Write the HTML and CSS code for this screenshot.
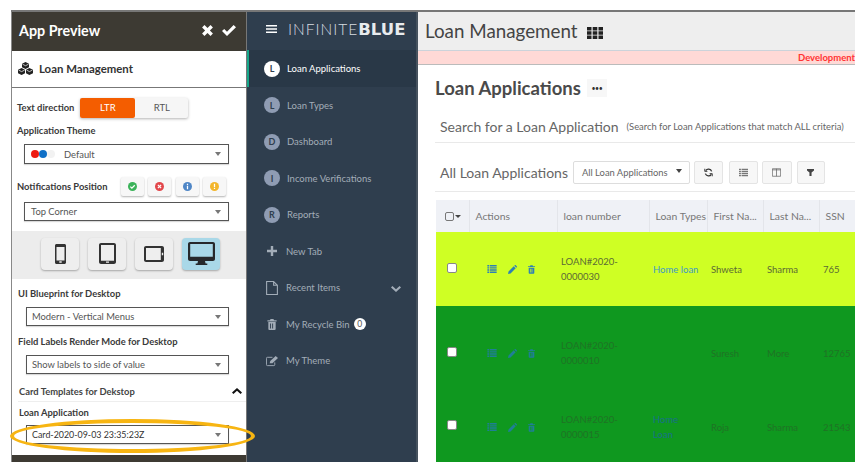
FILE: index.html
```html
<!DOCTYPE html>
<html lang="en">
<head>
    <meta charset="UTF-8">
    <title>App Preview - Loan Management</title>
    <link rel="stylesheet" href="styles.css">
</head>
<body>
    <svg class="sprites" aria-hidden="true">
        <symbol id="i-list" viewBox="0 0 14 12"><path d="M0 0h3v2.200H0zM4 0h10v2.200H4zM0 3.200h3v2.200H0zM4 3.200h10v2.200H4zM0 6.500h3v2.200H0zM4 6.500h10v2.200H4zM0 9.800h3V12H0zM4 9.800h10V12H4z"/></symbol>
        <symbol id="i-pencil" viewBox="0 0 12 12"><path d="M0 12l.7-3.400L7.600 1.700l2.700 2.700-6.900 6.900zM8.400.9l.6-.6c.4-.4 1-.4 1.400 0l1.300 1.300c.4.4.4 1 0 1.400l-.6.6z"/></symbol>
        <symbol id="i-trash" viewBox="0 0 10 12"><path fill-rule="evenodd" d="M3.400 0h3.200l.6 1.400H10v1.200H0V1.400h2.800zM1 3.400h8V11c0 .6-.4 1-1 1H2c-.6 0-1-.4-1-1zm1.800 1.400v5.600h1V4.800zm2.400 0v5.600h1V4.800z"/></symbol>
    </svg>

    <div class="frame">
        <aside class="preview">
            <div class="preview-head">
                <h1>App Preview</h1>
                <svg class="head-icon" viewBox="0 0 12 12"><path d="M1 3.200L3.200 1 6 3.800 8.800 1 11 3.200 8.200 6 11 8.800 8.800 11 6 8.200 3.200 11 1 8.800 3.800 6z"/></svg>
                <svg class="head-icon head-check" viewBox="0 0 14 12"><path d="M0 6.600l2.200-2.200 2.800 2.800L11.600.6 14 2.800 5 11.600z"/></svg>
            </div>
            <div class="app-row">
                <svg class="app-logo" viewBox="0 0 15 13"><path d="M7.500 0L11 1.800v3.400L7.500 7 4 5.200V1.800z"/><path d="M3.600 6L7 7.700v3.500L3.600 13 0 11.200V7.700z"/><path d="M11.400 6L15 7.700v3.500L11.400 13 8 11.200V7.700z"/><path d="M4.500 2.200l3 1.500 3-1.500M.6 8.100l3 1.500 3-1.500M8.600 8.100l2.800 1.500 3-1.500" fill="none" stroke="#fff" stroke-width=".7"/></svg>
                <span>Loan Management</span>
            </div>

            <div class="field-row dir-row">
                <label class="field-label">Text direction</label>
                <div class="toggle">
                    <span class="toggle-on">LTR</span>
                    <span>RTL</span>
                </div>
            </div>

            <label class="field-label theme-label">Application Theme</label>
            <div class="select theme-select">
                <span class="dots"><i class="dot-red"></i><i class="dot-blue"></i><i class="dot-white"></i></span>
                <span class="select-text">Default</span>
                <b class="caret"></b>
            </div>

            <div class="field-row notif-row">
                <label class="field-label">Notifications Position</label>
                <div class="notif-btns">
                    <span class="notif"><svg viewBox="0 0 10 10"><circle cx="5" cy="5" r="5" fill="#3cb35a"/><path d="M2.600 5.100l1.700 1.700 3.200-3.200" fill="none" stroke="#fff" stroke-width="1.400"/></svg></span>
                    <span class="notif"><svg viewBox="0 0 10 10"><circle cx="5" cy="5" r="5" fill="#e2474b"/><path d="M3.200 3.200l3.600 3.600M6.800 3.200L3.200 6.800" fill="none" stroke="#fff" stroke-width="1.400"/></svg></span>
                    <span class="notif"><svg viewBox="0 0 10 10"><circle cx="5" cy="5" r="5" fill="#4f86c6"/><path d="M4.300 2h1.400v1.300H4.300zM4.300 4.200h1.400V8H4.300z" fill="#fff"/></svg></span>
                    <span class="notif"><svg viewBox="0 0 10 10"><circle cx="5" cy="5" r="5" fill="#f3b62c"/><path d="M4.300 2h1.400v3.600H4.300zM4.300 6.400h1.400v1.500H4.300z" fill="#fff"/></svg></span>
                </div>
            </div>
            <div class="select notif-select">
                <span class="select-text">Top Corner</span>
                <b class="caret"></b>
            </div>

            <div class="devices">
                <span class="device">
                    <svg width="11" height="20" viewBox="0 0 11 20"><path fill-rule="evenodd" fill="#333" d="M1.500 0h8C10.300 0 11 .7 11 1.500v17c0 .8-.7 1.500-1.500 1.500h-8C.7 20 0 19.300 0 18.500v-17C0 .7.700 0 1.500 0zM1.500 3v13.500h8V3zM4.300 17.300v1.400h2.400v-1.400z"/></svg>
                </span>
                <span class="device">
                    <svg width="17" height="21" viewBox="0 0 17 21"><path fill-rule="evenodd" fill="#333" d="M2 0h13c1.100 0 2 .9 2 2v17c0 1.100-.9 2-2 2H2c-1.100 0-2-.9-2-2V2C0 .9.900 0 2 0zm0 2v15.800h13V2zm5 16.400v1.400h3v-1.400z"/></svg>
                </span>
                <span class="device">
                    <svg width="20" height="16" viewBox="0 0 20 16"><path fill-rule="evenodd" fill="#333" d="M2 0h16c1.100 0 2 .9 2 2v12c0 1.100-.9 2-2 2H2c-1.100 0-2-.9-2-2V2C0 .9.900 0 2 0zm0 2v12h14.800V2zm15.800 4.800v2.400h1.400V6.800z"/></svg>
                </span>
                <span class="device device-on">
                    <svg width="27" height="23" viewBox="0 0 27 23"><path fill-rule="evenodd" fill="#26282b" d="M2 0h23c1.100 0 2 .9 2 2v15c0 1.100-.9 2-2 2h-8l.6 2.400h1.700V23H7.700v-1.600h1.700L10 19H2c-1.100 0-2-.9-2-2V2C0 .9.900 0 2 0zm.2 2v12.800h22.600V2z"/></svg>
                </span>
            </div>

            <label class="field-label sub-label first-sub">UI Blueprint for Desktop</label>
            <div class="select sub-select">
                <span class="select-text">Modern - Vertical Menus</span>
                <b class="caret"></b>
            </div>

            <label class="field-label sub-label">Field Labels Render Mode for Desktop</label>
            <div class="select sub-select">
                <span class="select-text">Show labels to side of value</span>
                <b class="caret"></b>
            </div>

            <div class="card-head">
                <span>Card Templates for Dekstop</span>
                <svg viewBox="0 0 10 6"><path d="M0 4.400L5 0l5 4.400L8.600 6 5 2.800 1.400 6z"/></svg>
            </div>
            <label class="field-label loan-label">Loan Application</label>
            <div class="select sub-select">
                <span class="select-text card-text">Card-2020-09-03 23:35:23Z</span>
                <b class="caret"></b>
            </div>

            <div class="preview-foot"></div>
        </aside>

        <nav class="sidenav">
            <div class="brand">
                <svg class="burger" viewBox="0 0 11 8"><path d="M0 0h11v1.600H0zM0 3.200h11v1.600H0zM0 6.400h11V8H0z"/></svg>
                <span class="brand-thin">INFINITE</span><span class="brand-bold">BLUE</span>
            </div>
            <a class="nav-item nav-active"><span class="nav-badge">L</span>Loan Applications</a>
            <a class="nav-item"><span class="nav-badge">L</span>Loan Types</a>
            <a class="nav-item"><span class="nav-badge">D</span>Dashboard</a>
            <a class="nav-item"><span class="nav-badge">I</span>Income Verifications</a>
            <a class="nav-item"><span class="nav-badge">R</span>Reports</a>
            <a class="nav-item">
                <svg class="nav-icon" viewBox="0 0 10 10"><path d="M3.800 0h2.400v3.800H10v2.400H6.200V10H3.800V6.200H0V3.800h3.800z"/></svg>New Tab
            </a>
            <a class="nav-item">
                <svg class="nav-icon nav-icon-line" viewBox="0 0 11 13"><path d="M.5.500h6.500l3.500 3.500v8.500H.5zM7 .5V4h3.500"/></svg>Recent Items
                <svg class="nav-chevron" viewBox="0 0 10 6"><path d="M0 1.600L1.400 0 5 3.200 8.600 0 10 1.600 5 6z"/></svg>
            </a>
            <a class="nav-item">
                <svg class="nav-icon nav-icon-trash"><use href="#i-trash"/></svg>My Recycle Bin<span class="nav-count">0</span>
            </a>
            <a class="nav-item">
                <svg class="nav-icon nav-icon-edit" viewBox="0 0 13 11"><path class="edit-box" d="M9.500 7v2.500a1 1 0 0 1-1 1h-7a1 1 0 0 1-1-1v-7a1 1 0 0 1 1-1H7"/><path d="M4 8l.6-2.400L10.500 0 13 2.200 7 8z"/></svg>My Theme
            </a>
        </nav>

        <main class="content">
            <header class="topbar">
                <span>Loan Management</span>
                <svg class="grid-icon" viewBox="0 0 16 12"><path d="M0 0h4.500v3.500H0zM5.700 0h4.600v3.500H5.700zM11.500 0H16v3.500h-4.500zM0 4.300h4.500v3.500H0zM5.700 4.300h4.600v3.500H5.700zM11.500 4.300H16v3.500h-4.500zM0 8.500h4.500V12H0zM5.700 8.500h4.600V12H5.700zM11.500 8.500H16V12h-4.500z"/></svg>
            </header>
            <div class="env-banner"><span>Development</span></div>

            <div class="page">
                <div class="page-title">
                    <h2>Loan Applications</h2>
                    <span class="more-btn">&bull;&bull;&bull;</span>
                </div>

                <div class="section-head search-head">
                    <h3>Search for a Loan Application</h3>
                    <small>(Search for Loan Applications that match ALL criteria)</small>
                </div>

                <div class="section-head list-head">
                    <h3>All Loan Applications</h3>
                    <div class="view-select">All Loan Applications<b class="view-caret"></b></div>
                    <span class="tool-btn tool-refresh">
                        <svg viewBox="0 0 12 12" fill="none" stroke="#333" stroke-width="1.800"><path d="M10.200 4.500A4.500 4.500 0 0 0 2.200 3.600M1.800 7.500a4.500 4.500 0 0 0 8 .9"/><path d="M1 1v3.500h3.500M11 11V7.500H7.500" stroke-width="1.200"/></svg>
                    </span>
                    <span class="tool-btn tool-list"><svg fill="#777"><use href="#i-list"/></svg></span>
                    <span class="tool-btn tool-cols">
                        <svg viewBox="0 0 12 11" fill="none" stroke="#666"><path d="M.5.500h11v10H.5zM6 .5v10M.5 2h11"/></svg>
                    </span>
                    <span class="tool-btn tool-filter">
                        <svg viewBox="0 0 10 10" fill="#444"><path d="M0 0h10v2L6.500 5v5h-3V5L0 2z"/></svg>
                    </span>
                </div>

                <table class="grid">
                    <colgroup>
                        <col class="col-check"><col class="col-actions"><col class="col-number">
                        <col class="col-type"><col class="col-first"><col class="col-last"><col class="col-ssn">
                    </colgroup>
                    <thead>
                        <tr>
                            <th class="th-check"><span class="head-box"></span><b class="head-caret"></b></th>
                            <th class="th-actions">Actions</th>
                            <th>loan number</th>
                            <th>Loan Types</th>
                            <th>First Na...</th>
                            <th>Last Na...</th>
                            <th>SSN</th>
                        </tr>
                    </thead>
                    <tbody>
                        <tr class="row-lime">
                            <td class="td-check"><input type="checkbox"></td>
                            <td><div class="row-actions">
                                <svg class="act-list"><use href="#i-list"/></svg>
                                <svg class="act-pencil"><use href="#i-pencil"/></svg>
                                <svg class="act-trash"><use href="#i-trash"/></svg>
                            </div></td>
                            <td>LOAN#2020-<br>0000030</td>
                            <td><a>Home loan</a></td>
                            <td>Shweta</td>
                            <td>Sharma</td>
                            <td>765</td>
                        </tr>
                        <tr class="row-green row-tall">
                            <td class="td-check"><input type="checkbox"></td>
                            <td><div class="row-actions">
                                <svg class="act-list"><use href="#i-list"/></svg>
                                <svg class="act-pencil"><use href="#i-pencil"/></svg>
                                <svg class="act-trash"><use href="#i-trash"/></svg>
                            </div></td>
                            <td>LOAN#2020-<br>0000010</td>
                            <td></td>
                            <td>Suresh</td>
                            <td>More</td>
                            <td>12765</td>
                        </tr>
                        <tr class="row-green row-last">
                            <td class="td-check"><input type="checkbox"></td>
                            <td><div class="row-actions">
                                <svg class="act-list"><use href="#i-list"/></svg>
                                <svg class="act-pencil"><use href="#i-pencil"/></svg>
                                <svg class="act-trash"><use href="#i-trash"/></svg>
                            </div></td>
                            <td>LOAN#2020-<br>0000015</td>
                            <td><a>Home<br>Loan</a></td>
                            <td>Roja</td>
                            <td>Sharma</td>
                            <td>21543</td>
                        </tr>
                    </tbody>
                </table>
            </div>
        </main>

        <div class="highlight-ring"></div>
    </div>
</body>
</html>
```

FILE: styles.css
```css
/* General */
html, body {
    margin: 0;
    background: #fff;
}

body {
    font-family: Lato, "Open Sans", sans-serif;
    color: #333;
    overflow: hidden;
}

.sprites {
    display: none;
}

.frame {
    position: relative;
    display: flex;
    width: 844px;
    height: 452px;
    margin: 10px 0 0 11px;
    border-top: 2px solid #777;
    box-sizing: border-box;
}

/* App preview panel */
.preview {
    display: flex;
    flex-direction: column;
    flex: none;
    width: 235px;
    box-sizing: border-box;
    background: #fff;
    border-left: 1px solid #888;
}

.preview-head {
    display: flex;
    align-items: center;
    flex: none;
    height: 39px;
    padding: 0 10px 2px 7px;
    box-sizing: border-box;
    background: #3d3a33;
    color: #fff;
}

.preview-head h1 {
    flex: 1;
    margin: 0;
    font-size: 14.3px;
    font-weight: 700;
}

.head-icon {
    width: 13px;
    height: 13px;
    fill: #fff;
}

.head-check {
    width: 14px;
    margin-left: 8px;
}

.app-row {
    display: flex;
    align-items: center;
    gap: 6px;
    flex: none;
    height: 37px;
    padding: 0 0 2px 6px;
    box-sizing: border-box;
    border-bottom: 1px solid #777;
    font-size: 11.4px;
    font-weight: 700;
    color: #333;
}

.app-logo {
    width: 15px;
    height: 13px;
    fill: #222;
}

.field-row {
    display: flex;
    align-items: center;
    padding-left: 5px;
}

.dir-row {
    margin-top: 10px;
    gap: 6px;
}

.field-label {
    display: block;
    font-size: 9.4px;
    line-height: 14px;
    font-weight: 700;
    color: #3a3a3a;
}

.toggle {
    display: flex;
    height: 20px;
    font-size: 9.5px;
    line-height: 20px;
    text-align: center;
    background: #f6f6f6;
    box-shadow: 0 1px 3px rgba(0, 0, 0, 0.3);
    border-radius: 2px;
    color: #555;
}

.toggle span {
    width: 53px;
}

.toggle .toggle-on {
    width: 55px;
    background: #f45d00;
    color: #fff;
    border-radius: 2px;
}

.theme-label {
    margin: 6px 0 0 5px;
}

.select {
    display: flex;
    align-items: center;
    flex: none;
    height: 20px;
    box-sizing: border-box;
    background: #fff;
    border: 1px solid #555;
    box-shadow: 0 1px 1px rgba(0, 0, 0, 0.15);
    font-size: 9.4px;
    color: #555;
}

.select-text {
    flex: 1;
    white-space: nowrap;
}

.caret {
    width: 0;
    height: 0;
    margin-right: 7px;
    border-left: 3px solid transparent;
    border-right: 3px solid transparent;
    border-top: 4px solid #777;
}

.theme-select {
    margin: 6px 17px 0 12px;
    padding-left: 6px;
}

.dots {
    display: flex;
    margin-right: 9px;
}

.dots i {
    width: 8px;
    height: 8px;
    border-radius: 50%;
}

.dots .dot-red { background: #ee1c12; }
.dots .dot-blue { background: #0f6fc6; }
.dots .dot-white { background: #f2f2f2; }

.notif-row {
    margin-top: 13px;
    gap: 13px;
}

.notif-btns {
    display: flex;
    gap: 4.5px;
}

.notif {
    display: flex;
    align-items: center;
    justify-content: center;
    width: 23px;
    height: 19px;
    background: #f7f7f7;
    box-shadow: 0 1px 2px rgba(0, 0, 0, 0.3);
    border-radius: 2px;
}

.notif svg {
    width: 9px;
    height: 9px;
}

.notif-select {
    height: 19px;
    margin: 6px 17px 0 12px;
    padding-left: 6px;
}

.devices {
    display: flex;
    align-items: center;
    gap: 9px;
    flex: none;
    height: 48px;
    margin-top: 10px;
    padding: 0 0 3px 29px;
    box-sizing: border-box;
    background: #ececec;
}

.device {
    display: flex;
    align-items: center;
    justify-content: center;
    width: 38px;
    height: 32px;
    background: #eee;
    border-radius: 4px;
    box-shadow: 0 1px 2px rgba(0, 0, 0, 0.3);
}

.device-on {
    background: #a9d8e8;
}

.sub-label {
    margin: 9px 0 0 6px;
}

.first-sub {
    margin-top: 8px;
}

.sub-select {
    height: 19px;
    margin: 6px 17px 0 14px;
    padding-left: 5px;
}

.card-head {
    display: flex;
    align-items: center;
    justify-content: space-between;
    flex: none;
    height: 16px;
    margin: 9px 0 0 6px;
    padding: 0 4px 2px 1px;
    border-bottom: 1px solid #eee;
    font-size: 9.4px;
    font-weight: 700;
    color: #444;
}

.card-head svg {
    width: 10px;
    height: 6px;
    fill: #111;
}

.loan-label {
    margin: 4px 0 -1px 7px;
}

.card-text {
    font-size: 8.9px;
    color: #333;
}

.preview-foot {
    flex: none;
    height: 7px;
    margin-top: auto;
    background: #3d3a33;
}

/* Side navigation */
.sidenav {
    flex: none;
    width: 170px;
    box-sizing: border-box;
    background: #2f3e4e;
    border-left: 1px solid #777;
    font-size: 9.5px;
    color: #a3adb8;
}

.brand {
    display: flex;
    align-items: center;
    height: 38px;
    padding: 0 0 4px 19px;
    box-sizing: border-box;
    color: #d8dde2;
}

.burger {
    width: 11px;
    height: 8px;
    margin-right: 11px;
    fill: #fff;
}

.brand-thin {
    font-size: 15.5px;
    font-weight: 300;
    letter-spacing: 1px;
}

.brand-bold {
    font-family: "DejaVu Sans", sans-serif;
    font-size: 16.5px;
    font-weight: 700;
    color: #e8ebee;
}

.nav-item {
    display: flex;
    align-items: center;
    height: 36.5px;
    padding: 1px 0 0 17px;
    box-sizing: border-box;
}

.nav-active {
    padding-left: 15px;
    border-left: 2px solid #17a689;
    background: #293847;
    color: #fff;
}

.nav-badge {
    display: flex;
    align-items: center;
    justify-content: center;
    flex: none;
    width: 16px;
    height: 16px;
    margin-right: 7px;
    border-radius: 50%;
    background: #8f9cb3;
    font-size: 9px;
    font-weight: 700;
    color: #2f3e4e;
}

.nav-active .nav-badge {
    background: #fff;
}

.nav-icon {
    flex: none;
    width: 10px;
    height: 10px;
    margin: 0 9px 0 3px;
    fill: #a3adb8;
}

.nav-icon-line {
    width: 12px;
    height: 14px;
    margin: 0 8px 0 2px;
    fill: none;
    stroke: #a3adb8;
}

.nav-icon-trash {
    height: 11px;
}

.nav-icon-edit {
    width: 12px;
    height: 12px;
    margin: 0 8px 0 2px;
}

.edit-box {
    fill: none;
    stroke: #a3adb8;
}

.nav-chevron {
    width: 10px;
    height: 6px;
    margin: 2px 15px 0 auto;
    fill: #a3adb8;
}

.nav-count {
    width: 12px;
    height: 12px;
    margin-left: 4px;
    border-radius: 50%;
    background: #fff;
    font-size: 8.5px;
    line-height: 12px;
    text-align: center;
    color: #555;
}

/* Main content */
.content {
    flex: 1;
    min-width: 0;
    overflow: hidden;
    border-left: 2px solid #46525e;
}

.topbar {
    display: flex;
    align-items: center;
    height: 38px;
    padding: 0 0 2px 7px;
    box-sizing: border-box;
    background: #eee;
    font-size: 18.8px;
    color: #444;
}

.grid-icon {
    width: 16px;
    height: 12px;
    margin: 5px 0 0 9px;
    fill: #222;
}

.env-banner {
    height: 15px;
    box-sizing: border-box;
    padding-left: 380px;
    background: #ffd9d6;
    border-top: 1px solid #ccd3da;
    border-bottom: 1px solid #bbb;
    font-size: 9.5px;
    line-height: 13px;
    font-weight: 700;
    color: #f33;
    white-space: nowrap;
}

.page {
    padding: 0 0 0 17px;
}

.page-title {
    display: flex;
    align-items: center;
    height: 18px;
    margin-top: 14px;
}

.page-title h2 {
    margin: 0;
    font-size: 18.5px;
    font-weight: 700;
    color: #4a4a4a;
}

.more-btn {
    width: 20px;
    height: 18px;
    margin-left: 6px;
    background: #f7f7f7;
    font-size: 7px;
    line-height: 18px;
    text-align: center;
    color: #333;
    letter-spacing: -0.5px;
}

.section-head {
    display: flex;
    align-items: center;
    box-sizing: border-box;
    padding-left: 5px;
    border-bottom: 1px solid #e9e9e9;
}

.section-head h3 {
    margin: 0;
    font-size: 14px;
    font-weight: 400;
    color: #666;
    white-space: nowrap;
}

.section-head small {
    margin-left: 8px;
    font-size: 9.4px;
    color: #666;
    white-space: nowrap;
}

.search-head {
    height: 25px;
    margin-top: 21px;
    padding-bottom: 7px;
}

.list-head {
    height: 31px;
    margin-top: 18px;
    padding-bottom: 7px;
}

.view-select {
    position: relative;
    width: 117px;
    height: 23px;
    margin-left: 5px;
    padding-left: 8px;
    box-sizing: border-box;
    background: #fff;
    border: 1px solid #ddd;
    border-radius: 2px;
    font-size: 9.4px;
    line-height: 22px;
    color: #666;
}

.view-caret {
    position: absolute;
    top: 7px;
    right: 7px;
    width: 0;
    height: 0;
    border-left: 3px solid transparent;
    border-right: 3px solid transparent;
    border-top: 4px solid #444;
}

.tool-btn {
    display: flex;
    align-items: center;
    justify-content: center;
    flex: none;
    width: 29px;
    height: 23px;
    box-sizing: border-box;
    background: #f7f7f7;
    border: 1px solid #e4e4e4;
    border-radius: 2px;
}

.tool-btn svg {
    width: 9px;
    height: 9px;
}

.tool-refresh { margin-left: 4px; }
.tool-list { margin-left: 6px; }
.tool-cols { width: 30px; margin-left: 4px; }
.tool-filter { width: 28px; margin-left: 5px; }
.tool-filter svg { width: 7px; height: 7px; }

/* Records table */
.grid {
    width: 419px;
    margin: 8px 0 0 1px;
    border-collapse: collapse;
    table-layout: fixed;
    font-size: 9.5px;
}

.col-check { width: 33px; }
.col-actions { width: 88px; }
.col-number { width: 92px; }
.col-type { width: 58px; }
.col-first { width: 56px; }
.col-last { width: 56px; }
.col-ssn { width: 36px; }

.grid th {
    height: 32px;
    padding: 0 0 0 6px;
    box-sizing: border-box;
    background: #eff1f6;
    border-left: 1px solid #e3e5ea;
    font-size: 10.4px;
    font-weight: 400;
    text-align: left;
    color: #777;
    white-space: nowrap;
}

.grid .th-check {
    padding-left: 9px;
    border-left: 0;
}

.head-box {
    display: inline-block;
    width: 7px;
    height: 7px;
    border: 1px solid #777;
    border-radius: 2px;
    vertical-align: -1px;
}

.head-caret {
    display: inline-block;
    width: 0;
    height: 0;
    margin-left: 1px;
    border-left: 3px solid transparent;
    border-right: 3px solid transparent;
    border-top: 3px solid #444;
    vertical-align: 2px;
}

.grid td {
    padding: 0 0 0 4px;
    box-sizing: border-box;
    line-height: 15px;
    vertical-align: middle;
    white-space: nowrap;
}

.grid .td-check {
    padding: 0 0 3px 11px;
}

.grid input {
    display: block;
    width: 10px;
    height: 10px;
    margin: 0;
    appearance: none;
    box-sizing: border-box;
    background: #fff;
    border: 1px solid #888;
    border-radius: 2px;
}

.row-actions {
    display: flex;
    align-items: center;
    gap: 11px;
    padding: 0 0 0 14px;
}

.row-actions svg {
    display: block;
    flex: none;
}

.act-list { width: 10px; height: 8px; }
.act-pencil { width: 9px; height: 9px; }
.act-trash { width: 7px; height: 9px; }

.row-lime td {
    height: 74px;
    background: #cfff24;
    color: #5b6a35;
}

.row-lime a {
    color: #3f9ac4;
}

.row-lime svg {
    fill: #2f80b5;
}

.row-green td {
    background: #0f981f;
    color: #1f7325;
}

.row-green a {
    color: #17708a;
}

.row-green svg {
    fill: #1f7f96;
}

.row-tall td {
    height: 94px;
}

.row-last td {
    height: 62px;
    padding-bottom: 8px;
}

.grid .row-last .td-check {
    padding-bottom: 12px;
}

.highlight-ring {
    position: absolute;
    left: -1px;
    top: 407px;
    width: 245px;
    height: 34px;
    box-sizing: border-box;
    border: 4px solid #f7b512;
    border-radius: 50%;
    pointer-events: none;
}
```
